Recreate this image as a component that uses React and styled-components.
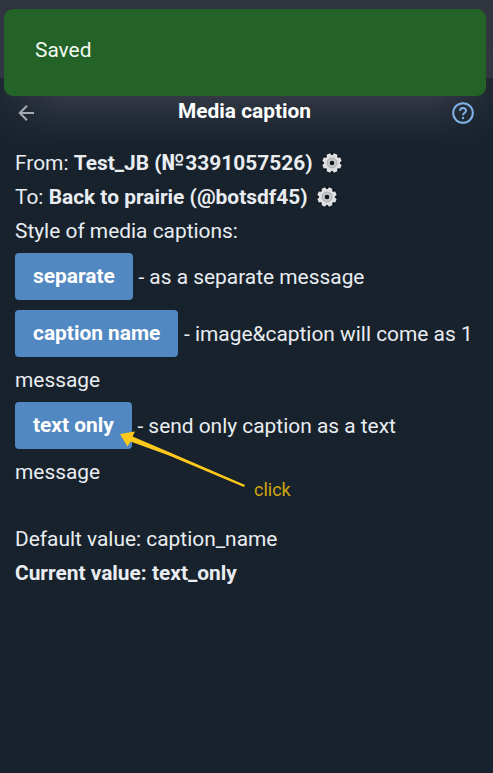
import React from 'react';
import styled, { createGlobalStyle } from 'styled-components';

const GlobalStyle = createGlobalStyle`
    * {
        box-sizing: border-box;
    }

    body {
        margin: 0;
        background: #18222c;
    }
`;

const Page = styled.div`
    position: relative;
    min-height: 773px;
    overflow: hidden;
    background: linear-gradient(#30343f 0, #333743 78px, #18222c 78px);
    color: #e9edf2;
    font-family: Roboto, "Liberation Sans", sans-serif;
    font-size: 20.9px;
    line-height: 34px;
`;

const Toast = styled.div`
    position: absolute;
    top: 9px;
    left: 4px;
    width: 482px;
    height: 87px;
    padding: 0 31px 5px;
    display: flex;
    align-items: center;
    border-radius: 9px;
    background: #236328;
    color: #f1f8f0;
`;

const Header = styled.header`
    height: 68px;
    margin-top: 78px;
    padding: 2px 19px 0 18px;
    display: flex;
    align-items: center;
    justify-content: space-between;
    background:
        linear-gradient(90deg, rgba(24, 34, 44, 0.75) 0, rgba(24, 34, 44, 0) 60px, rgba(24, 34, 44, 0) 433px, rgba(24, 34, 44, 0.75) 100%),
        linear-gradient(#343944 0, #343944 18px, #242d38 38px, #1a242f 62px, #18222c 100%);
`;

const Title = styled.h1`
    margin: 0 0 4px 1px;
    color: #ffffff;
    font-size: 20.9px;
    font-weight: 700;
`;

const Content = styled.main`
    padding: 0 15px;
`;

const Line = styled.div`
    height: 34px;
    display: flex;
    align-items: center;
    white-space: pre;
    font-weight: ${props => (props.$bold ? 700 : 400)};

    svg {
        margin-left: 8px;
    }
`;

const Numero = styled.span`
    font-size: 22.5px;
    line-height: 20px;
    padding-right: 1px;
`;

const Options = styled.div`
    margin-top: 5px;
`;

const Option = styled.div`
    height: 47px;
    margin-bottom: ${props => props.$gap || 0}px;
    display: flex;
    align-items: center;
    gap: 5.6px;
    white-space: nowrap;
`;

const Rest = styled.div`
    height: 45px;
    line-height: 46px;
`;

const Button = styled.button`
    height: 47px;
    padding: 0 18px 1px;
    border: 0;
    border-radius: 4px;
    background: #5288c1;
    color: #ffffff;
    font: inherit;
    font-weight: 700;
`;

const Values = styled.div`
    margin-top: 28px;
`;

const Annotation = styled.div`
    position: absolute;
    top: 424px;
    left: 115px;
    color: #d0a60f;
    font-size: 18px;
    line-height: 20px;

    span {
        position: absolute;
        top: 56px;
        left: 139px;
    }
`;

const BackIcon = () => (
    <svg width="18" height="18" viewBox="0 0 18 18" fill="none" stroke="#a7abb2" strokeWidth="2">
        <path d="M16 9H2M9 1.8L1.8 9L9 16.2" />
    </svg>
);

const HelpIcon = () => (
    <svg width="22" height="22" viewBox="0 0 22 22" fill="none" stroke="#7fb2e5" strokeWidth="2">
        <circle cx="11" cy="11" r="9.8" />
        <path d="M8 8.8C8 5 14 5 14 8.7C14 11 11 11 11 13.3" />
        <circle cx="11" cy="16" r="1.2" fill="#7fb2e5" stroke="none" />
    </svg>
);

const teeth = [22.5, 67.5, 112.5, 157.5, 202.5, 247.5, 292.5, 337.5];

const GearIcon = () => (
    <svg width="22" height="22" viewBox="-11 -11 22 22">
        <circle r="10.4" fill="#0c131b" />
        {teeth.map(angle => (
            <path key={angle} d="M-3 -6L-1.8 -9.7H1.8L3 -6Z" fill="#e1e2e4" transform={`rotate(${angle})`} />
        ))}
        <circle r="7.8" fill="#dddee0" />
        <circle r="4.9" fill="#c6c7ca" stroke="#a3a5a9" strokeWidth="0.9" />
        <circle r="2.3" fill="#10171e" />
    </svg>
);

const App = () => {
    return (
        <Page>
            <GlobalStyle />
            <Header>
                <BackIcon />
                <Title>Media caption</Title>
                <HelpIcon />
            </Header>
            <Content>
                <Line>From: <b>Test_JB (<Numero>№</Numero>3391057526)</b><GearIcon /></Line>
                <Line>To: <b>Back to prairie (@botsdf45)</b><GearIcon /></Line>
                <Line>Style of media captions:</Line>
                <Options>
                    <Option $gap={10}><Button>separate</Button> - as a separate message</Option>
                    <Option><Button>caption name</Button> - image&amp;caption will come as 1</Option>
                    <Rest>message</Rest>
                    <Option><Button>text only</Button> - send only caption as a text</Option>
                    <Rest>message</Rest>
                </Options>
                <Values>
                    <Line>Default value: caption_name</Line>
                    <Line $bold>Current value: text_only</Line>
                </Values>
            </Content>
            <Toast>Saved</Toast>
            <Annotation>
                <svg width="136" height="70" viewBox="0 0 136 70">
                    <path d="M5 10L20 7.5L17.5 12.5L55 28.5L130 61L129 63L54 31.5L15.5 17.5L12.5 22.5Z" fill="#ffc91c" />
                </svg>
                <span>click</span>
            </Annotation>
        </Page>
    );
};

export default App;
